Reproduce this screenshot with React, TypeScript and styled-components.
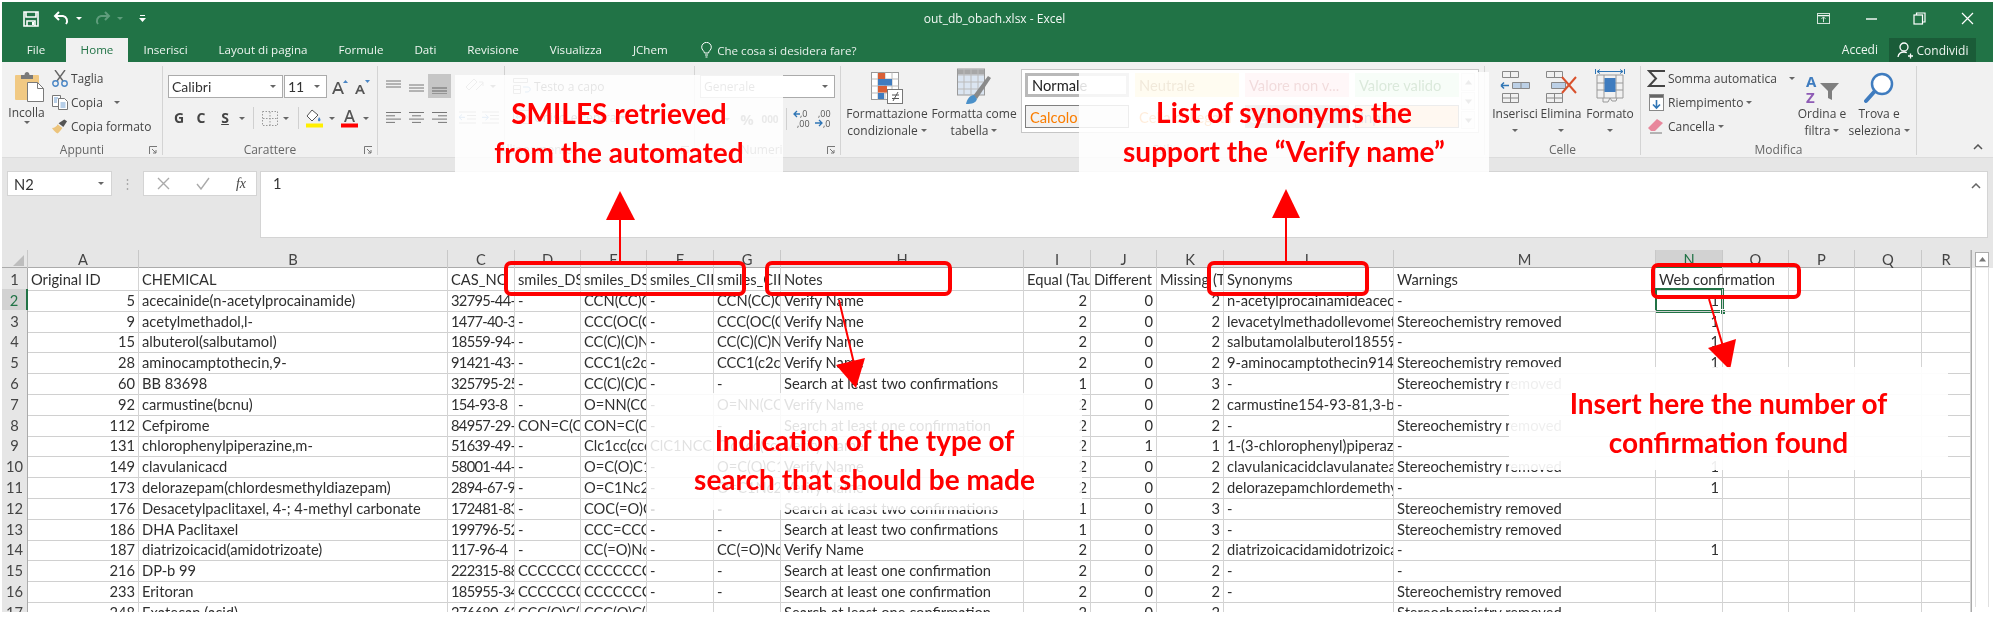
import React from 'react';
import styled, { createGlobalStyle } from 'styled-components';

const Global = createGlobalStyle`
  html, body { margin: 0; padding: 0; background: #fff; width: 1998px; height: 620px; overflow: hidden; }
`;

const UI = `"Open Sans", "Noto Sans", sans-serif`;
const GRID = `"Lato", "Open Sans", sans-serif`;

const Page = styled.div`
  position: relative;
  box-sizing: border-box;
  width: 1998px;
  height: 620px;
  padding: 2px 5px 8px 2px;
  overflow: hidden;
  background: #fff;
  font-family: ${UI};
  filter: blur(0.5px);
`;

/* ---------- title bar ---------- */
const TitleBar = styled.header`
  background: #217346;
  color: #fff;
  height: 60px;
  display: flex;
  flex-direction: column;
`;
const TopRow = styled.div`
  height: 36px;
  display: grid;
  grid-template-columns: 1fr auto 1fr;
  align-items: center;
`;
const Qat = styled.div`
  display: flex;
  align-items: center;
  padding-left: 21px;
  gap: 6px;
  margin-top: -3px;
`;
const DocTitle = styled.div`
  font-size: 12px;
  color: #f2f7f4;
  margin-left: -6px;
  margin-top: -4px;
`;
const WinButtons = styled.div`
  display: flex;
  justify-content: flex-end;
  padding-right: 19px;
  gap: 35px;
  margin-top: -4px;
`;
const TabRow = styled.nav`
  height: 24px;
  display: flex;
  align-items: stretch;
  padding-left: 4px;
`;
const Tab = styled.div<{ $active?: boolean; $w?: number }>`
  box-sizing: border-box;
  ${p => (p.$w ? `width: ${p.$w}px; text-align: center;` : 'padding: 0 15.5px;')}
  font-size: 11.6px;
  line-height: 24px;
  color: ${p => (p.$active ? '#217346' : '#eef5f0')};
  background: ${p => (p.$active ? '#f1f1f1' : 'transparent')};
  white-space: nowrap;
`;
const TellMe = styled.div`
  display: flex;
  align-items: center;
  gap: 5px;
  margin-left: 18px;
  font-size: 11.6px;
  color: #e8f1eb;
`;
const TabRight = styled.div`
  margin-left: auto;
  display: flex;
  align-items: stretch;
  padding-right: 17px;
  font-size: 12px;
`;
const SignIn = styled.div`
  line-height: 24px;
  padding-right: 11px;
  color: #eef5f0;
`;
const ShareBtn = styled.div`
  width: 87px;
  box-sizing: border-box;
  background: #1a5c38;
  display: flex;
  align-items: center;
  justify-content: center;
  gap: 4px;
  color: #eef5f0;
`;

/* ---------- ribbon ---------- */
const Ribbon = styled.section`
  height: 96px;
  box-sizing: border-box;
  padding-top: 4px;
  background: #f1f1f1;
  display: flex;
  border-bottom: 1px solid #dcdcdc;
  color: #444;
  font-size: 12px;
`;
const Group = styled.div<{ $w: number }>`
  position: relative;
  box-sizing: border-box;
  width: ${p => p.$w}px;
  height: 89px;
  border-right: 1px solid #d4d4d4;
  display: flex;
  flex-direction: column;
`;
const GroupBody = styled.div<{ $pl?: number }>`
  flex: 1;
  min-height: 0;
  display: flex;
  padding-left: ${p => p.$pl ?? 0}px;
`;
const GroupLabel = styled.div<{ $shift?: number }>`
  height: 10px;
  line-height: 10px;
  text-align: center;
  color: #666;
  font-size: 12px;
  padding-right: ${p => p.$shift ?? 0}px;
`;
const Launcher = styled.svg`
  position: absolute;
  right: 4px;
  bottom: 0;
  width: 9px;
  height: 9px;
`;
const PasteCol = styled.div`
  width: 37px;
  display: flex;
  flex-direction: column;
  align-items: center;
  padding-top: 5px;
  line-height: 17px;
`;
const PasteIconWrap = styled.div`
  margin: 0 0 1px 6px;
  height: 32px;
`;
const SmallCol = styled.div<{ $w?: number; $ml?: number }>`
  ${p => (p.$w ? `width: ${p.$w}px;` : '')}
  margin-left: ${p => p.$ml ?? 0}px;
  display: flex;
  flex-direction: column;
`;
const SmallRow = styled.div`
  height: 24px;
  display: flex;
  align-items: center;
  gap: 3px;
  white-space: nowrap;
`;
const IconSlot = styled.span<{ $w?: number }>`
  display: inline-flex;
  width: ${p => p.$w ?? 16}px;
  justify-content: center;
  flex: none;
`;
const Caret = styled.span<{ $ml?: number; $c?: string }>`
  display: inline-block;
  flex: none;
  width: 0;
  height: 0;
  margin-left: ${p => p.$ml ?? 0}px;
  border-left: 3px solid transparent;
  border-right: 3px solid transparent;
  border-top: 3px solid ${p => p.$c ?? '#666'};
`;
const FontCol = styled.div`
  display: flex;
  flex-direction: column;
  padding: 9px 0 0 5px;
`;
const ToolRow = styled.div<{ $mt?: number; $h?: number }>`
  display: flex;
  align-items: center;
  height: ${p => p.$h ?? 24}px;
  margin-top: ${p => p.$mt ?? 0}px;
`;
const Combo = styled.div<{ $w: number; $ml?: number; $plain?: boolean }>`
  box-sizing: border-box;
  width: ${p => p.$w}px;
  height: 23px;
  margin-left: ${p => p.$ml ?? 0}px;
  background: #fff;
  border: 1px solid #ababab;
  display: flex;
  align-items: center;
  justify-content: space-between;
  padding: 0 6px 0 3px;
  font-family: ${p => (p.$plain ? UI : GRID)};
  font-size: ${p => (p.$plain ? 12 : 14)}px;
  color: ${p => (p.$plain ? '#666' : '#333')};
`;
const Glyph = styled.span<{ $ml?: number; $w?: number; $size?: number; $c?: string; $u?: boolean }>`
  display: inline-block;
  width: ${p => p.$w ?? 12}px;
  margin-left: ${p => p.$ml ?? 0}px;
  text-align: center;
  font-family: ${UI};
  font-weight: 700;
  font-size: ${p => p.$size ?? 13}px;
  line-height: 16px;
  color: ${p => p.$c ?? '#444'};
  ${p => (p.$u ? 'text-decoration: underline;' : '')}
`;
const Sep = styled.span<{ $ml?: number; $h?: number }>`
  display: inline-block;
  flex: none;
  width: 1px;
  height: ${p => p.$h ?? 22}px;
  background: #d0d0d0;
  margin-left: ${p => p.$ml ?? 0}px;
`;
const Spaced = styled.span<{ $ml?: number }>`
  display: inline-flex;
  flex: none;
  margin-left: ${p => p.$ml ?? 0}px;
`;
const AlignGrid = styled.div`
  margin: 8px 0 0 4px;
  display: grid;
  grid-template-columns: repeat(3, 23px);
  grid-auto-rows: 24px;
  row-gap: 7px;
`;
const AlignCell = styled.div<{ $on?: boolean }>`
  display: flex;
  align-items: center;
  justify-content: center;
  background: ${p => (p.$on ? '#c6c6c6' : 'transparent')};
`;
const WrapCol = styled.div`
  display: flex;
  flex-direction: column;
  margin: 8px 0 0 8px;
`;
const BigBtn = styled.div<{ $w: number; $ml?: number }>`
  width: ${p => p.$w}px;
  margin-left: ${p => p.$ml ?? 0}px;
  flex: none;
  display: flex;
  flex-direction: column;
  align-items: center;
  white-space: nowrap;
  line-height: 17px;
`;
const BigIcon = styled.div`
  height: 38px;
  display: flex;
  align-items: flex-end;
  margin-bottom: 1px;
`;
const TextLine = styled.div`
  height: 17px;
  display: flex;
  align-items: center;
  gap: 3px;
`;
const Gallery = styled.div`
  box-sizing: border-box;
  width: 458px;
  height: 64px;
  margin: 3px 0 0 4px;
  background: #fff;
  border: 1px solid #c6c6c6;
  display: flex;
  padding: 3px;
`;
const StyleGrid = styled.div`
  flex: 1;
  display: grid;
  grid-template-columns: repeat(4, 104px);
  grid-template-rows: 24px 23px;
  column-gap: 6px;
  row-gap: 8px;
`;
const StyleCell = styled.div<{ $bg: string; $c: string; $b?: string }>`
  box-sizing: border-box;
  background: ${p => p.$bg};
  color: ${p => p.$c};
  border: ${p => p.$b ?? 'none'};
  font-family: ${GRID};
  font-size: 14.7px;
  display: flex;
  align-items: center;
  padding: 0 4px;
  white-space: nowrap;
  overflow: hidden;
`;
const GalleryScroll = styled.div`
  width: 14px;
  display: flex;
  flex-direction: column;
  gap: 1px;
`;
const GalleryBtn = styled.div`
  flex: 1;
  border: 1px solid #e1e1e1;
  background: #f4f4f4;
  display: flex;
  align-items: center;
  justify-content: center;
`;
const CollapseBtn = styled.div`
  margin-left: auto;
  align-self: flex-end;
  padding: 0 10px 7px 0;
  display: flex;
`;

/* ---------- formula bar ---------- */
const FormulaArea = styled.section`
  height: 93px;
  box-sizing: border-box;
  background: #e6e6e6;
  padding: 13px 5px 0 5px;
  display: flex;
  align-items: flex-start;
`;
const NameBox = styled.div`
  box-sizing: border-box;
  width: 105px;
  height: 25px;
  background: #fff;
  border: 1px solid #d4d4d4;
  display: flex;
  align-items: center;
  justify-content: space-between;
  padding: 0 7px 0 6px;
  font-family: ${GRID};
  font-size: 14.7px;
  color: #333;
`;
const Dots = styled.div`
  width: 31px;
  text-align: center;
  font-size: 13px;
  line-height: 25px;
  color: #aaa;
`;
const FxBox = styled.div`
  box-sizing: border-box;
  width: 114px;
  height: 25px;
  background: #fff;
  border: 1px solid #d4d4d4;
  display: flex;
  align-items: center;
  justify-content: space-between;
  padding: 0 10px 0 13px;
`;
const FxText = styled.span`
  font-family: "Liberation Serif", serif;
  font-style: italic;
  font-size: 14px;
  color: #444;
`;
const FormulaInput = styled.div`
  position: relative;
  box-sizing: border-box;
  flex: 1;
  height: 67px;
  margin-left: 3px;
  background: #fff;
  border: 1px solid #d4d4d4;
  padding: 2px 6px 2px 12px;
  font-family: ${GRID};
  font-size: 14.7px;
  color: #333;
  display: flex;
  justify-content: space-between;
`;

/* ---------- sheet ---------- */
const COLS = '26px 111px 309px 67px 66px 66px 67px 67px 243px 67px 66px 67px 170px 262px 67px 66px 66px 67px 49px';

const Sheet = styled.section`
  display: flex;
  height: 362px;
  margin-top: -1px;
`;
const Grid = styled.div`
  width: 1969px;
  height: 362px;
  overflow: hidden;
  font-family: ${GRID};
  font-size: 14.7px;
  color: #2f2f2f;
  background: #fff;
`;
const HeaderRow = styled.div`
  display: grid;
  grid-template-columns: ${COLS};
  height: 18px;
  background: #e6e6e6;
  border-bottom: 1px solid #ababab;
  box-sizing: border-box;
`;
const ColHead = styled.div<{ $on?: boolean }>`
  text-align: center;
  line-height: 18px;
  color: ${p => (p.$on ? '#217346' : '#444')};
  background: ${p => (p.$on ? '#d2d2d2' : 'transparent')};
  box-shadow: ${p => (p.$on ? 'inset 0 -2px 0 #217346' : 'none')};
  border-right: 1px solid #c8c8c8;
`;
const Corner = styled.div`
  border-right: 1px solid #c8c8c8;
  position: relative;
  &::after {
    content: '';
    position: absolute;
    right: 3px;
    bottom: 2px;
    border-left: 11px solid transparent;
    border-bottom: 11px solid #bdbdbd;
  }
`;
const DataRow = styled.div`
  display: grid;
  grid-template-columns: ${COLS};
  height: 20.8px;
`;
const RowHead = styled.div<{ $on?: boolean }>`
  box-sizing: border-box;
  text-align: center;
  line-height: 22px;
  color: ${p => (p.$on ? '#217346' : '#444')};
  background: ${p => (p.$on ? '#d2d2d2' : '#e6e6e6')};
  border-bottom: 1px solid #c8c8c8;
  border-right: ${p => (p.$on ? '2px solid #217346' : '1px solid #ababab')};
`;
const Cell = styled.div<{ $num?: boolean; $sel?: boolean; $spill?: boolean; $tight?: boolean }>`
  position: relative;
  box-sizing: border-box;
  padding: 0 3px;
  line-height: 22px;
  white-space: nowrap;
  overflow: ${p => (p.$sel || p.$spill ? 'visible' : 'hidden')};
  text-align: ${p => (p.$num ? 'right' : 'left')};
  letter-spacing: ${p => (p.$tight ? '-0.7px' : 'normal')};
  border-right: 1px solid #d4d4d4;
  border-bottom: 1px solid #d0d0d0;
  ${p =>
    p.$sel
      ? `box-shadow: 0 0 0 1px #217346, inset 0 0 0 1px #217346;
         &::after { content: ''; position: absolute; right: -4px; bottom: -4px; width: 6px; height: 6px; background: #217346; border: 1px solid #fff; box-sizing: border-box; }`
      : ''}
`;
const Scrollbar = styled.aside`
  width: 22px;
  box-sizing: border-box;
  background: linear-gradient(#e6e6e6 0 18px, #fff 18px);
  padding: 2px 4px 0 3px;
  border-left: 1px solid #ababab;
`;
const ScrollUp = styled.div`
  height: 15px;
  background: #fff;
  border: 1px solid #ababab;
  box-sizing: border-box;
  display: flex;
  align-items: center;
  justify-content: center;
`;
const ScrollTrack = styled.div`
  height: 340px;
  border-left: 1px solid #e0e0e0;
  border-right: 1px solid #e0e0e0;
`;

/* ---------- annotations ---------- */
const Veil = styled.div<{ $x: number; $y: number; $w: number; $h: number; $a: number; $pt: number }>`
  position: absolute;
  left: ${p => p.$x}px;
  top: ${p => p.$y}px;
  width: ${p => p.$w}px;
  height: ${p => p.$h}px;
  box-sizing: border-box;
  padding-top: ${p => p.$pt}px;
  background: rgba(255, 255, 255, ${p => p.$a});
  text-align: center;
  color: #ff0000;
  font-family: ${GRID};
  font-weight: 700;
  font-size: 28px;
  line-height: 39px;
  white-space: nowrap;
`;
const Callout = styled.div<{ $x: number; $y: number; $w: number; $h: number }>`
  position: absolute;
  left: ${p => p.$x}px;
  top: ${p => p.$y}px;
  width: ${p => p.$w}px;
  height: ${p => p.$h}px;
  box-sizing: border-box;
  border: 4px solid #ff0000;
  border-radius: 7px;
`;
const ArrowLayer = styled.svg`
  position: absolute;
  left: 0;
  top: 0;
`;

/* ---------- icons ---------- */
const SaveIcon = () => (
  <svg width="16" height="16" viewBox="0 0 16 16" fill="none" stroke="#fff" strokeWidth="1.6">
    <path d="M1 1h14v14H1z" />
    <path d="M3 1v5h10V1M4 15v-5h8v5" />
    <rect x="9" y="11" width="2" height="3" fill="#fff" stroke="none" />
  </svg>
);
const UndoIcon = ({ c = '#fff' }: { c?: string }) => (
  <svg width="17" height="15" viewBox="0 0 17 15" fill="none" stroke={c} strokeWidth="2">
    <path d="M6 1 2 5l4 4" />
    <path d="M2 5h8a5 5 0 0 1 3 8" />
  </svg>
);
const RedoIcon = () => (
  <svg width="17" height="15" viewBox="0 0 17 15" fill="none" stroke="#5f9d7c" strokeWidth="2">
    <path d="m11 1 4 4-4 4" />
    <path d="M15 5H7a5 5 0 0 0-3 8" />
  </svg>
);
const QatMore = () => (
  <svg width="7" height="9" viewBox="0 0 7 9" fill="#fff">
    <rect x="1" y="1" width="5" height="1" />
    <path d="M0 4h7L3.5 8z" />
  </svg>
);
const RibbonDisplay = () => (
  <svg width="13" height="13" viewBox="0 0 16 13" fill="none" stroke="#fff">
    <rect x=".5" y=".5" width="15" height="12" />
    <path d="M1 3h14" strokeWidth="1.5" />
    <path d="M8 11V5M5.5 7 8 4.5 10.5 7" />
  </svg>
);
const MinIcon = () => (
  <svg width="13" height="13" viewBox="0 0 13 13" stroke="#fff" strokeWidth="1.4">
    <path d="M1 7h11" />
  </svg>
);
const RestoreIcon = () => (
  <svg width="13" height="13" viewBox="0 0 13 13" fill="none" stroke="#fff" strokeWidth="1.2">
    <rect x="1" y="3" width="8.5" height="9" />
    <path d="M3.5 3V1H12v9H9.5" />
  </svg>
);
const CloseIcon = () => (
  <svg width="13" height="13" viewBox="0 0 13 13" stroke="#fff" strokeWidth="1.2">
    <path d="m1 1 11 11M12 1 1 12" />
  </svg>
);
const BulbIcon = () => (
  <svg width="11" height="16" viewBox="0 0 11 16" fill="none" stroke="#fff" strokeWidth="1">
    <path d="M3.5 11C3 8.500.7 8 .7 5.200a4.800 4.800 0 0 1 9.600 0C10.300 8 8 8.500 7.500 11z" />
    <path d="M4 13h3M4.500 15h2" />
  </svg>
);
const PersonIcon = () => (
  <svg width="16" height="17" viewBox="0 0 16 17" fill="none" stroke="#fff" strokeWidth="1.3">
    <circle cx="7" cy="5" r="4" />
    <path d="M1 15c.5-3 2.500-5 6-5 1 0 2 .2 2.800.6M11 14h5M13.500 11.500v5" />
  </svg>
);
const PasteIcon = () => (
  <svg width="30" height="31" viewBox="0 0 30 31">
    <rect x="0" y="4" width="24" height="25" rx="1" fill="#f1c983" />
    <path d="M6 4h3.500c0-4 5-4 5 0H18v4H6z" fill="#7a7a7a" />
    <path d="M12.500 11.500h10l6 6v13h-16z" fill="#fff" stroke="#7a7a7a" />
    <path d="M22.500 11.500v6h6" fill="none" stroke="#7a7a7a" />
  </svg>
);
const ScissorsIcon = () => (
  <svg width="16" height="17" viewBox="0 0 16 17" fill="none">
    <path d="M3 0 11 11M13 0 5 11" stroke="#666" strokeWidth="1.4" />
    <circle cx="3.500" cy="13.500" r="2.700" stroke="#4a86c5" strokeWidth="1.400" />
    <circle cx="12.500" cy="13.500" r="2.700" stroke="#4a86c5" strokeWidth="1.400" />
  </svg>
);
const CopyIcon = () => (
  <svg width="16" height="15" viewBox="0 0 16 15" fill="#fff" stroke="#777">
    <path d="M.5.500h8v11h-8z" />
    <path d="M6.500 3.500h6l3 3v8h-9z" />
    <path d="M2 3h4M2 5h3M2 7h3M8.500 8h5M8.500 10h5M8.500 12h5" stroke="#4a86c5" fill="none" strokeWidth=".8" />
  </svg>
);
const BrushIcon = () => (
  <svg width="17" height="15" viewBox="0 0 17 15">
    <path d="M0 9c3 0 5-2 6-4l5 4c-2 3-4 5-5 6-2-1-4-3-6-6z" fill="#ecc47c" />
    <path d="m7 4 6-4 3 2-4 6z" fill="#555" />
  </svg>
);
const LauncherIcon = () => (
  <Launcher viewBox="0 0 9 9" fill="none" stroke="#777">
    <path d="M.5 8V.5H8" />
    <path d="M3 3l4 4M7 4v3H4" />
  </Launcher>
);
const LetterA = ({ big }: { big?: boolean }) => (
  <svg width="16" height="16" viewBox="0 0 16 16">
    <path d={big ? 'M0 15 5 3h2l5 12h-2l-1.200-3H3.200L2 15zM3.800 10h4.400L6 4.800z' : 'M1 15 5 6h2l4 9H9l-1-2.500H4L3 15zM4.700 10.800h2.600L6 7.500z'} fill="#555" />
    <path d={big ? 'M11 4l2.500-3L16 4z' : 'M11 1h5l-2.500 3z'} fill="#4a86c5" />
  </svg>
);
const BorderIcon = () => (
  <svg width="16" height="15" viewBox="0 0 16 15" fill="none" stroke="#999" strokeDasharray="1.500 1.500">
    <rect x=".5" y=".5" width="15" height="14" />
    <path d="M8 1v13M1 7.500h14" />
  </svg>
);
const FillIcon = () => (
  <svg width="17" height="19" viewBox="0 0 17 19">
    <path d="M6 1 1 7l5 5 6-6z" fill="#fff" stroke="#555" />
    <path d="M13 8c1.500 2 2 3 1 4-1 .8-2.500 0-2-1.500z" fill="#4a86c5" />
    <rect x="0" y="14.500" width="17" height="4" fill="#ffef00" />
  </svg>
);
const FontColorIcon = () => (
  <svg width="17" height="19" viewBox="0 0 17 19">
    <path d="M3 13 7.500 1h2L14 13h-2l-1-3H6l-1 3zM6.600 8.300h3.800L8.500 3z" fill="#555" />
    <rect x="0" y="14.500" width="17" height="4" fill="#ff0000" />
  </svg>
);
const Lines = ({ kind }: { kind: 'l' | 'c' | 'r' | 'top' | 'mid' | 'bot' }) => {
  const w = [15, 9, 15, 9];
  if (kind === 'top' || kind === 'mid' || kind === 'bot') {
    const y = kind === 'top' ? 2 : kind === 'mid' ? 6 : 9;
    return (
      <svg width="15" height="15" viewBox="0 0 15 15" stroke={kind === 'bot' ? '#666' : '#777'}>
        {[0, 3, 6].map(d => (
          <path key={d} d={`M0 ${y + d}h15`} />
        ))}
      </svg>
    );
  }
  return (
    <svg width="15" height="13" viewBox="0 0 15 13" stroke="#777">
      {w.map((v, i) => {
        const x = kind === 'l' ? 0 : kind === 'c' ? (15 - v) / 2 : 15 - v;
        return <path key={i} d={`M${x} ${1.5 + i * 3.3}h${v}`} />;
      })}
    </svg>
  );
};
const OrientIcon = () => (
  <svg width="22" height="18" viewBox="0 0 22 18" fill="none" stroke="#888">
    <path d="m2 10 8-8 3 3-8 8zM12 13l7-7M15 5h4v4" />
  </svg>
);
const IndentIcon = ({ flip }: { flip?: boolean }) => (
  <svg width="17" height="13" viewBox="0 0 17 13" stroke="#888" fill="none">
    <path d="M0 1h17M8 4.500h9M8 8h9M0 12h17" />
    <path d={flip ? 'M0 6.300h6M3 3.500 0 6.300l3 2.800' : 'M0 6.300h6M3.500 3.500l3 2.800-3 2.800'} stroke="#4a86c5" />
  </svg>
);
const WrapIcon = () => (
  <svg width="18" height="16" viewBox="0 0 18 16" fill="none" stroke="#888">
    <path d="M.5.500h14v4H.5zM.5 7.500h7v4h-7zM.5 11.500h7v4h-7z" />
    <path d="M10 9h5c3 0 3 5-1 5h-2" stroke="#4a86c5" />
  </svg>
);
const MergeIcon = () => (
  <svg width="18" height="14" viewBox="0 0 18 14" fill="none" stroke="#888">
    <path d="M.5.500h17v13H.5z" />
    <path d="M3 7h12M3 7l2-2M3 7l2 2M15 7l-2-2M15 7l-2 2" stroke="#4a86c5" />
  </svg>
);
const DecimalIcon = ({ flip }: { flip?: boolean }) => (
  <svg width="18" height="20" viewBox="0 0 18 20">
    <text x={flip ? 4 : 7} y="8" fontFamily="Open Sans" fontSize="9" fill="#555">{flip ? ',00' : ',0'}</text>
    <text x={flip ? 9 : 4} y="18" fontFamily="Open Sans" fontSize="9" fill="#555">{flip ? ',0' : ',00'}</text>
    <path d={flip ? 'M1 14h7M5 11l3 3-3 3' : 'M1 5h6M4 2 1 5l3 3'} stroke="#2f75b5" fill="none" strokeWidth="1.300" />
  </svg>
);
const CondFmtIcon = () => (
  <svg width="32" height="32" viewBox="0 0 32 32">
    <rect x=".5" y=".5" width="27" height="27" fill="#fff" stroke="#999" />
    <path d="M7 .5v27M14 .5v27M21 .5v27M.5 7h27M.5 14h27M.5 21h27" stroke="#bbb" />
    <rect x="7" y="1" width="7" height="6" fill="#d95f36" />
    <rect x="7" y="7" width="14" height="6.500" fill="#3f7cbf" />
    <rect x="7" y="14" width="9" height="6.500" fill="#d95f36" />
    <rect x="7" y="21" width="6" height="6" fill="#3f7cbf" />
    <rect x="16.500" y="17.500" width="15" height="14" fill="#fff" stroke="#777" />
    <path d="M21 23h7M21 26.500h7M22 29l5-9" stroke="#555" />
  </svg>
);
const TableFmtIcon = () => (
  <svg width="34" height="36" viewBox="0 0 34 36">
    <rect x=".5" y="1" width="27" height="26" fill="#dbe5f1" stroke="#999" />
    <rect x="1" y="1.500" width="26" height="5" fill="#a7a7a7" />
    <path d="M7 1v26M14 1v26M21 1v26M1 7h26M1 14h26M1 21h26" stroke="#bbb" />
    <path d="m16 28 15-20 3 2-14 21z" fill="#8a8a8a" />
    <path d="M9 36c1-5 4-9 8-9l3 4c-1 4-5 5-11 5z" fill="#4a90c9" />
  </svg>
);
const InsertCellIcon = () => (
  <svg width="31" height="34" viewBox="0 0 31 34" fill="none" stroke="#888">
    <path d="M2.500 1.500h16v6h-16zM10.500 1.500v6M2.500 23.500h16v9h-16zM10.500 23.500v9M2.500 28h16" />
    <path d="M12.500 12.500h17v6h-17zM21 12.500v6" fill="#bcd0e6" />
    <path d="M1 15.500h8M1 15.500l3-3M1 15.500l3 3" stroke="#2f75b5" strokeWidth="1.500" />
  </svg>
);
const DeleteCellIcon = () => (
  <svg width="32" height="34" viewBox="0 0 32 34" fill="none" stroke="#888">
    <path d="M1.500 1.500h16v6h-16zM9.500 1.500v6M1.500 23.500h16v9h-16zM9.500 23.500v9M1.500 28h16" />
    <path d="M6.500 12.500h14v6h-14z" fill="#bcd0e6" />
    <path d="m17 7 14 16M31 7 17 23" stroke="#d9512c" strokeWidth="2" />
  </svg>
);
const FormatCellIcon = () => (
  <svg width="30" height="35" viewBox="0 0 30 35" fill="none" stroke="#999">
    <path d="M2 6h26v23H2zM9 6v23M21 6v23M2 14h26M2 21h26" />
    <rect x="9.500" y="9" width="11" height="14" fill="#3f7cbf" stroke="none" />
    <path d="M8 29v4h5l2-4 2 3h4l1-3" />
    <path d="M.5 0v5M29.500 0v5M2 2.500h26M2 2.500 5 .5M2 2.500l3 2M28 2.500l-3-2M28 2.500l-3 2" stroke="#2f75b5" />
  </svg>
);
const SigmaIcon = () => (
  <svg width="18" height="17" viewBox="0 0 18 17" fill="none" stroke="#444" strokeWidth="2">
    <path d="M17 2V1H2l7 7.500L2 16h15v-1" />
  </svg>
);
const FillDownIcon = () => (
  <svg width="15" height="17" viewBox="0 0 15 17" fill="#fff" stroke="#888">
    <rect x=".5" y=".5" width="14" height="16" />
    <rect x=".5" y=".5" width="14" height="3" fill="#666" />
    <path d="M7.500 6v8M4 10.500l3.500 3.500 3.500-3.500" stroke="#2f75b5" strokeWidth="1.600" fill="none" />
  </svg>
);
const EraserIcon = () => (
  <svg width="16" height="16" viewBox="0 0 16 16">
    <path d="M0 10 9 1l6 4-8 8H3z" fill="#e8879c" />
    <path d="M2 15h12" stroke="#777" />
  </svg>
);
const SortIcon = () => (
  <svg width="33" height="31" viewBox="0 0 33 31">
    <text x="0" y="14" fontFamily="Open Sans" fontWeight="700" fontSize="15" fill="#3f7cbf">A</text>
    <text x="0" y="30" fontFamily="Open Sans" fontWeight="700" fontSize="15" fill="#8e5bb5">Z</text>
    <path d="M14 10h19l-7 8v9l-4-2v-7z" fill="#7f7f7f" />
  </svg>
);
const SearchIcon = () => (
  <svg width="30" height="32" viewBox="0 0 30 32" fill="none">
    <circle cx="18" cy="12" r="10" stroke="#3f7cbf" strokeWidth="2.500" fill="#fff" />
    <path d="M10.500 19.500 2 29" stroke="#3f7cbf" strokeWidth="4" strokeLinecap="round" />
  </svg>
);
const Chevron = ({ c = '#555' }: { c?: string }) => (
  <svg width="10" height="6" viewBox="0 0 10 6" fill="none" stroke={c} strokeWidth="1.500">
    <path d="m1 5 4-4 4 4" />
  </svg>
);
const SmallTri = ({ up }: { up?: boolean }) => (
  <svg width="7" height="5" viewBox="0 0 7 5" fill="#777">
    <path d={up ? 'M0 4.500 3.500 0 7 4.500z' : 'M0 .5 3.500 5 7 .5z'} />
  </svg>
);

/* ---------- data ---------- */
const colLetters = 'ABCDEFGHIJKLMNOPQR'.split('');
const V = 'Verify Name';
const T = 'Search at least two confirmations';
const O = 'Search at least one confirmation';
const S = 'Stereochemistry removed';
const rows: (string | number)[][] = [
  ['Original ID', 'CHEMICAL', 'CAS_NO', 'smiles_DSSTox', 'smiles_DSSTox', 'smiles_CIIR', 'smiles_CIIR', 'Notes', 'Equal (Tautomers)', 'Different (Tautomers)', 'Missing (Tautomers)', 'Synonyms', 'Warnings', 'Web confirmation', '', '', '', ''],
  [5, 'acecainide(n-acetylprocainamide)', '32795-44-1', '-', 'CCN(CC)CCNC', '-', 'CCN(CC)CCNC', V, 2, 0, 2, 'n-acetylprocainamideacecainide', '-', 1],
  [9, 'acetylmethadol,l-', '1477-40-3', '-', 'CCC(OC(C)=O)', '-', 'CCC(OC(C)=O)', V, 2, 0, 2, 'levacetylmethadollevomethadyl', S, 1],
  [15, 'albuterol(salbutamol)', '18559-94-9', '-', 'CC(C)(C)NCC', '-', 'CC(C)(C)NCC', V, 2, 0, 2, 'salbutamolalbuterol18559-94-9', '-', 1],
  [28, 'aminocamptothecin,9-', '91421-43-1', '-', 'CCC1(c2c(CN', '-', 'CCC1(c2c(CN', V, 2, 0, 2, '9-aminocamptothecin91421-43-1', S, 1],
  [60, 'BB 83698', '325795-25-8', '-', 'CC(C)(C)CCC', '-', '-', T, 1, 0, 3, '-', S, ''],
  [92, 'carmustine(bcnu)', '154-93-8', '-', 'O=NN(CCCl)C', '-', 'O=NN(CCCl)C', V, 2, 0, 2, 'carmustine154-93-81,3-bis(2-', '-', ''],
  [112, 'Cefpirome', '84957-29-9', 'CON=C(C(=O', 'CON=C(C(=O', '-', '-', O, 2, 0, 2, '-', S, ''],
  [131, 'chlorophenylpiperazine,m-', '51639-49-1', '-', 'Clc1cc(ccc1', 'ClC1NCCN1', 'Clc1cc(ccc1', V, 2, 1, 1, '1-(3-chlorophenyl)piperazine', '-', ''],
  [149, 'clavulanicacd', '58001-44-8', '-', 'O=C(O)C1C', '-', 'O=C(O)C1C', V, 2, 0, 2, 'clavulanicacidclavulanateacid', S, 1],
  [173, 'delorazepam(chlordesmethyldiazepam)', '2894-67-9', '-', 'O=C1Nc2cc', '-', 'O=C1Nc2cc', V, 2, 0, 2, 'delorazepamchlordemethyldiaz', '-', 1],
  [176, 'Desacetylpaclitaxel, 4-; 4-methyl carbonate', '172481-83-7', '-', 'COC(=O)OC', '-', '-', T, 1, 0, 3, '-', S, ''],
  [186, 'DHA Paclitaxel', '199796-52-2', '-', 'CCC=CCC=C', '-', '-', T, 1, 0, 3, '-', S, ''],
  [187, 'diatrizoicacid(amidotrizoate)', '117-96-4', '-', 'CC(=O)Nc1c', '-', 'CC(=O)Nc1c', V, 2, 0, 2, 'diatrizoicacidamidotrizoicacid', '-', 1],
  [216, 'DP-b 99', '222315-88-3', 'CCCCCCCCCC', 'CCCCCCCCCC', '-', '-', O, 2, 0, 2, '-', '-', ''],
  [233, 'Eritoran', '185955-34-4', 'CCCCCCC=CC', 'CCCCCCC=CC', '-', '-', O, 2, 0, 2, '-', S, ''],
  [248, 'Exatecan (acid)', '276680-63-3', 'CCC(O)C(C(', 'CCC(O)C(C(', '-', '-', O, 2, 0, 2, '-', S, ''],
];

export default function App() {
  return (
    <Page>
      <Global />
      <TitleBar>
        <TopRow>
          <Qat>
            <SaveIcon />
            <Spaced $ml={8}><UndoIcon /></Spaced>
            <Caret $c="#fff" />
            <Spaced $ml={6}><RedoIcon /></Spaced>
            <Caret $c="#5f9d7c" />
            <Spaced $ml={10}><QatMore /></Spaced>
          </Qat>
          <DocTitle>out_db_obach.xlsx - Excel</DocTitle>
          <WinButtons>
            <RibbonDisplay />
            <MinIcon />
            <RestoreIcon />
            <CloseIcon />
          </WinButtons>
        </TopRow>
        <TabRow>
          <Tab $w={60}>File</Tab>
          <Tab $active $w={62}>Home</Tab>
          <Tab>Inserisci</Tab>
          <Tab>Layout di pagina</Tab>
          <Tab>Formule</Tab>
          <Tab>Dati</Tab>
          <Tab>Revisione</Tab>
          <Tab>Visualizza</Tab>
          <Tab>JChem</Tab>
          <TellMe><BulbIcon />Che cosa si desidera fare?</TellMe>
          <TabRight>
            <SignIn>Accedi</SignIn>
            <ShareBtn><PersonIcon />Condividi</ShareBtn>
          </TabRight>
        </TabRow>
      </TitleBar>

      <Ribbon>
        <Group $w={161}>
          <GroupBody $pl={6}>
            <PasteCol>
              <PasteIconWrap><PasteIcon /></PasteIconWrap>
              <div>Incolla</div>
              <Caret />
            </PasteCol>
            <SmallCol $ml={7}>
              <SmallRow><IconSlot><ScissorsIcon /></IconSlot>Taglia</SmallRow>
              <SmallRow><IconSlot><CopyIcon /></IconSlot>Copia<Caret $ml={8} /></SmallRow>
              <SmallRow><IconSlot><BrushIcon /></IconSlot>Copia formato</SmallRow>
            </SmallCol>
          </GroupBody>
          <GroupLabel>Appunti</GroupLabel>
          <LauncherIcon />
        </Group>

        <Group $w={215}>
          <GroupBody>
            <FontCol>
              <ToolRow $h={23}>
                <Combo $w={115}>Calibri<Caret /></Combo>
                <Combo $w={43} $ml={1}>11<Caret /></Combo>
                <Spaced $ml={5}><LetterA big /></Spaced>
                <Spaced $ml={6}><LetterA /></Spaced>
              </ToolRow>
              <ToolRow $mt={8}>
                <Glyph $ml={5} $size={14}>G</Glyph>
                <Glyph $ml={10} $size={14}>C</Glyph>
                <Glyph $ml={12} $size={14} $u>S</Glyph>
                <Caret $ml={8} />
                <Sep $ml={8} />
                <Spaced $ml={8}><BorderIcon /></Spaced>
                <Caret $ml={5} />
                <Sep $ml={9} />
                <Spaced $ml={7}><FillIcon /></Spaced>
                <Caret $ml={6} />
                <Spaced $ml={6}><FontColorIcon /></Spaced>
                <Caret $ml={5} />
              </ToolRow>
            </FontCol>
          </GroupBody>
          <GroupLabel>Carattere</GroupLabel>
          <LauncherIcon />
        </Group>

        <Group $w={317}>
          <GroupBody>
            <AlignGrid>
              <AlignCell><Lines kind="top" /></AlignCell>
              <AlignCell><Lines kind="mid" /></AlignCell>
              <AlignCell $on><Lines kind="bot" /></AlignCell>
              <AlignCell><Lines kind="l" /></AlignCell>
              <AlignCell><Lines kind="c" /></AlignCell>
              <AlignCell><Lines kind="r" /></AlignCell>
            </AlignGrid>
            <WrapCol>
              <ToolRow><Spaced $ml={5}><OrientIcon /></Spaced><Caret $ml={4} /></ToolRow>
              <ToolRow $mt={7}><IndentIcon flip /><Spaced $ml={6}><IndentIcon /></Spaced></ToolRow>
            </WrapCol>
            <Sep $ml={5} $h={74} />
            <WrapCol>
              <ToolRow><WrapIcon /><Spaced $ml={3}>Testo a capo</Spaced></ToolRow>
              <ToolRow $mt={7}><MergeIcon /><Spaced $ml={3}>Unisci e centra</Spaced><Caret $ml={4} /></ToolRow>
            </WrapCol>
          </GroupBody>
          <GroupLabel>Allineamento</GroupLabel>
          <LauncherIcon />
        </Group>

        <Group $w={146}>
          <GroupBody>
            <FontCol>
              <Combo $w={135} $plain>Generale<Caret /></Combo>
              <ToolRow $mt={9}>
                <Caret $ml={24} />
                <Glyph $ml={8} $w={18} $size={15} $c="#666">%</Glyph>
                <Glyph $ml={4} $w={20} $size={10} $c="#666">000</Glyph>
                <Sep $ml={6} />
                <Spaced $ml={6}><DecimalIcon /></Spaced>
                <Spaced $ml={3}><DecimalIcon flip /></Spaced>
              </ToolRow>
            </FontCol>
          </GroupBody>
          <GroupLabel $shift={12}>Numeri</GroupLabel>
          <LauncherIcon />
        </Group>

        <Group $w={644}>
          <GroupBody $pl={4}>
            <BigBtn $w={84}>
              <BigIcon><CondFmtIcon /></BigIcon>
              <TextLine>Formattazione</TextLine>
              <TextLine>condizionale<Caret /></TextLine>
            </BigBtn>
            <BigBtn $w={86} $ml={2}>
              <BigIcon><TableFmtIcon /></BigIcon>
              <TextLine>Formatta come</TextLine>
              <TextLine>tabella<Caret /></TextLine>
            </BigBtn>
            <Gallery>
              <StyleGrid>
                <StyleCell $bg="#fff" $c="#222" $b="3px solid #b9b9b9">Normale</StyleCell>
                <StyleCell $bg="#ffeb9c" $c="#9c6500">Neutrale</StyleCell>
                <StyleCell $bg="#ffc7ce" $c="#9c0006">Valore non v...</StyleCell>
                <StyleCell $bg="#c6efce" $c="#006100">Valore valido</StyleCell>
                <StyleCell $bg="#f2f2f2" $c="#fa7d00" $b="1px solid #7f7f7f">Calcolo</StyleCell>
                <StyleCell $bg="#fff" $c="#fa7d00">Cella collegata</StyleCell>
                <StyleCell $bg="#a5a5a5" $c="#fff">Cella da ver...</StyleCell>
                <StyleCell $bg="#ffcc99" $c="#3f3f76" $b="1px solid #7f7f7f">Input</StyleCell>
              </StyleGrid>
              <GalleryScroll>
                <GalleryBtn><SmallTri up /></GalleryBtn>
                <GalleryBtn><SmallTri /></GalleryBtn>
                <GalleryBtn><SmallTri /></GalleryBtn>
              </GalleryScroll>
            </Gallery>
          </GroupBody>
          <GroupLabel>Stili</GroupLabel>
        </Group>

        <Group $w={156}>
          <GroupBody $pl={7}>
            <BigBtn $w={46}>
              <BigIcon><InsertCellIcon /></BigIcon>
              <TextLine>Inserisci</TextLine>
              <TextLine><Caret /></TextLine>
            </BigBtn>
            <BigBtn $w={46}>
              <BigIcon><DeleteCellIcon /></BigIcon>
              <TextLine>Elimina</TextLine>
              <TextLine><Caret /></TextLine>
            </BigBtn>
            <BigBtn $w={48} $ml={2}>
              <BigIcon><FormatCellIcon /></BigIcon>
              <TextLine>Formato</TextLine>
              <TextLine><Caret /></TextLine>
            </BigBtn>
          </GroupBody>
          <GroupLabel>Celle</GroupLabel>
        </Group>

        <Group $w={276}>
          <GroupBody $pl={6}>
            <SmallCol $w={150}>
              <SmallRow><IconSlot $w={18}><SigmaIcon /></IconSlot>Somma automatica<Caret $ml={9} /></SmallRow>
              <SmallRow><IconSlot $w={18}><FillDownIcon /></IconSlot>Riempimento<Caret /></SmallRow>
              <SmallRow><IconSlot $w={18}><EraserIcon /></IconSlot>Cancella<Caret /></SmallRow>
            </SmallCol>
            <BigBtn $w={50}>
              <BigIcon><SortIcon /></BigIcon>
              <TextLine>Ordina e</TextLine>
              <TextLine>filtra<Caret /></TextLine>
            </BigBtn>
            <BigBtn $w={62} $ml={1}>
              <BigIcon><SearchIcon /></BigIcon>
              <TextLine>Trova e</TextLine>
              <TextLine>seleziona<Caret /></TextLine>
            </BigBtn>
          </GroupBody>
          <GroupLabel>Modifica</GroupLabel>
        </Group>

        <CollapseBtn><Chevron /></CollapseBtn>
      </Ribbon>

      <FormulaArea>
        <NameBox>N2<Caret /></NameBox>
        <Dots>⋮</Dots>
        <FxBox>
          <svg width="13" height="13" viewBox="0 0 13 13" stroke="#aaa" strokeWidth="1.400"><path d="m1 1 11 11M12 1 1 12" /></svg>
          <svg width="14" height="13" viewBox="0 0 14 13" fill="none" stroke="#aaa" strokeWidth="1.400"><path d="m1 7 4 5 8-11" /></svg>
          <FxText>fx</FxText>
        </FxBox>
        <FormulaInput>
          <span>1</span>
          <span><Chevron c="#666" /></span>
        </FormulaInput>
      </FormulaArea>

      <Sheet>
        <Grid>
          <HeaderRow>
            <Corner />
            {colLetters.map(l => (
              <ColHead key={l} $on={l === 'N'}>{l}</ColHead>
            ))}
          </HeaderRow>
          {rows.map((row, r) => (
            <DataRow key={r}>
              <RowHead $on={r === 1}>{r + 1}</RowHead>
              {colLetters.map((_, c) => {
                const v = row[c] ?? '';
                return (
                  <Cell
                    key={c}
                    $num={typeof v === 'number'}
                    $sel={r === 1 && c === 13}
                    $spill={r === 0 && c === 13}
                    $tight={c === 2 && r > 0}
                  >
                    {v}
                  </Cell>
                );
              })}
            </DataRow>
          ))}
        </Grid>
        <Scrollbar>
          <ScrollUp><SmallTri up /></ScrollUp>
          <ScrollTrack />
        </Scrollbar>
      </Sheet>

      <ArrowLayer width="1998" height="620" viewBox="0 0 1998 620" fill="#ff0000" stroke="none">
        <path d="M620 262V215M1286 261V215M839 300 856 372M1709 299 1727 360" stroke="#ff0000" strokeWidth="2" fill="none" />
        <polygon points="620,191 606,220 635,220" />
        <polygon points="1286,189 1272,218 1300,218" />
        <polygon points="856,388 836,365 865,358" />
        <polygon points="1730,370 1708,348 1736,339" />
      </ArrowLayer>

      <Veil $x={455} $y={75} $w={328} $h={106} $a={0.86} $pt={19}>SMILES retrieved<br />from the automated</Veil>
      <Veil $x={1079} $y={72} $w={410} $h={109} $a={0.86} $pt={21}>List of synonyms the<br />support the “Verify name”</Veil>
      <Veil $x={647} $y={393} $w={435} $h={117} $a={0.86} $pt={28}>Indication of the type of<br />search that should be made</Veil>
      <Veil $x={1509} $y={367} $w={439} $h={103} $a={0.92} $pt={17}>Insert here the number of<br />confirmation found</Veil>

      <Callout $x={504} $y={261} $w={242} $h={35} />
      <Callout $x={765} $y={261} $w={187} $h={35} />
      <Callout $x={1207} $y={261} $w={162} $h={35} />
      <Callout $x={1651} $y={263} $w={150} $h={36} />
    </Page>
  );
}
